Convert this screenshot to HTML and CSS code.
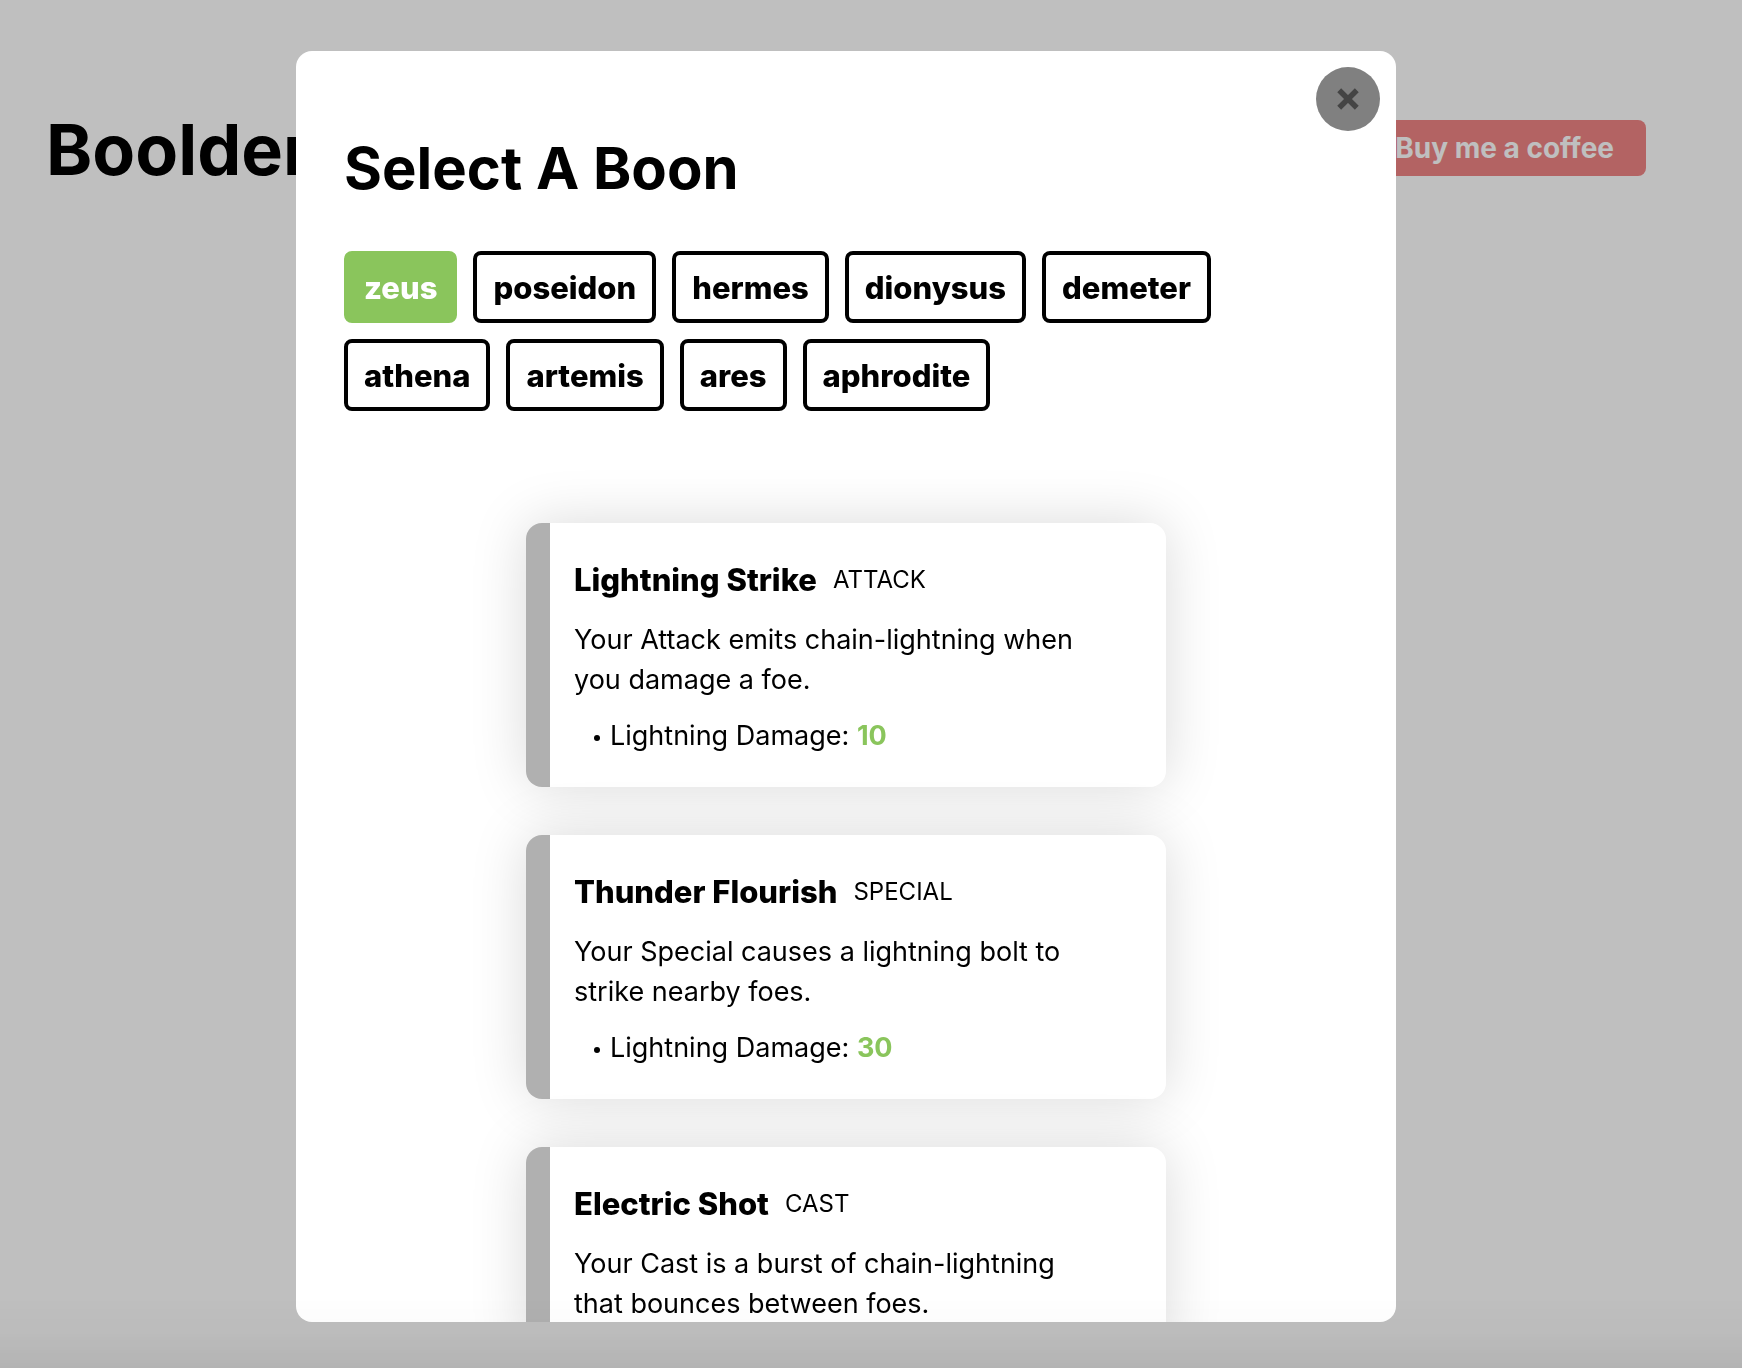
FILE: index.html
```html
<!DOCTYPE html>
<html lang="en">
<head>
<meta charset="utf-8">
<meta name="viewport" content="width=device-width, initial-scale=1">
<title>Boolder</title>
<link rel="stylesheet" href="styles.css">
</head>
<body>
<header class="site-header">
  <h1 class="site-title">Boolder</h1>
  <a class="coffee" href="#coffee">Buy me a coffee</a>
</header>

<div class="overlay">
  <section class="modal" role="dialog" aria-modal="true" aria-labelledby="modal-title">
    <button class="close" type="button" aria-label="Close">
      <svg class="close-icon" viewBox="0 0 20 20" aria-hidden="true"><path d="M2 2 18 18M18 2 2 18"/></svg>
    </button>
    <h2 class="modal-title" id="modal-title">Select A Boon</h2>
    <div class="gods">
      <button class="god god-active" type="button">zeus</button>
      <button class="god" type="button">poseidon</button>
      <button class="god" type="button">hermes</button>
      <button class="god" type="button">dionysus</button>
      <button class="god" type="button">demeter</button>
      <button class="god" type="button">athena</button>
      <button class="god" type="button">artemis</button>
      <button class="god" type="button">ares</button>
      <button class="god" type="button">aphrodite</button>
    </div>
    <div class="boons">
      <article class="boon">
        <div class="boon-head"><h3 class="boon-name">Lightning Strike</h3><span class="boon-slot">ATTACK</span></div>
        <p class="boon-text">Your Attack emits chain-lightning when you damage a foe.</p>
        <ul class="boon-stats"><li>Lightning Damage: <strong class="value">10</strong></li></ul>
      </article>
      <article class="boon">
        <div class="boon-head"><h3 class="boon-name">Thunder Flourish</h3><span class="boon-slot">SPECIAL</span></div>
        <p class="boon-text">Your Special causes a lightning bolt to strike nearby foes.</p>
        <ul class="boon-stats"><li>Lightning Damage: <strong class="value">30</strong></li></ul>
      </article>
      <article class="boon">
        <div class="boon-head"><h3 class="boon-name">Electric Shot</h3><span class="boon-slot">CAST</span></div>
        <p class="boon-text">Your Cast is a burst of chain-lightning that bounces between foes.</p>
      </article>
    </div>
  </section>
</div>
<div class="bottom-shade"></div>
</body>
</html>
```

FILE: styles.css
```css
* {
  box-sizing: border-box;
}

body {
  margin: 0;
  background: #fff;
  color: #000;
  font-family: Inter, "Liberation Sans", sans-serif;
  font-size: 27px;
  line-height: 40px;
}

h1,
h2,
h3,
p,
ul {
  margin: 0;
}

button {
  font: inherit;
  color: inherit;
  cursor: pointer;
}

.site-header {
  display: flex;
  align-items: flex-end;
  justify-content: space-between;
  padding: 96px 96px 0 46px;
}

.site-title {
  font-size: 70px;
  line-height: 108px;
  font-weight: 700;
}

.coffee {
  margin-bottom: 28px;
  padding: 8px 32px;
  border-radius: 8px;
  background: #ef8585;
  color: #fff;
  font-size: 28px;
  font-weight: 700;
  text-decoration: none;
}

.overlay {
  position: fixed;
  inset: 0;
  display: flex;
  justify-content: center;
  padding: 51px 50px 46px 0;
  background: rgba(0, 0, 0, 0.25);
}

.modal {
  position: relative;
  width: 100%;
  max-width: 1100px;
  padding: 80px 48px 0;
  border-radius: 16px;
  background: #fff;
  overflow: hidden;
}

.close {
  position: absolute;
  top: 16px;
  right: 16px;
  display: flex;
  align-items: center;
  justify-content: center;
  width: 64px;
  height: 64px;
  padding: 0;
  border: 0;
  border-radius: 50%;
  background: #808080;
}

.close-icon {
  width: 22px;
  height: 22px;
  fill: none;
  stroke: #444;
  stroke-width: 5;
}

.modal-title {
  font-size: 58px;
  line-height: 74px;
  font-weight: 700;
}

.gods {
  display: flex;
  flex-wrap: wrap;
  gap: 16px;
  padding-top: 46px;
}

.god {
  padding: 13px 16px 11px;
  border: 4px solid #000;
  border-radius: 8px;
  background: #fff;
  font-size: 31px;
  font-weight: 800;
}

.god-active {
  border-color: #8ac55c;
  background: #8ac55c;
  color: #fff;
}

.boons {
  display: flex;
  flex-direction: column;
  gap: 48px;
  max-width: 640px;
  margin: 112px auto 0;
}

.boon {
  padding: 37px 64px 31px 24px;
  border-left: 24px solid #b0b0b0;
  border-radius: 16px;
  background: #fff;
  box-shadow: 0 0 56px rgba(0, 0, 0, 0.15);
}

.boon-head {
  display: flex;
  align-items: center;
  gap: 16px;
}

.boon-name {
  font-size: 31px;
  font-weight: 800;
}

.boon-slot {
  font-size: 24px;
}

.boon-text {
  padding-top: 20px;
}

.boon-stats {
  padding: 16px 0 0 20px;
  list-style: none;
}

.boon-stats li::before {
  content: "";
  display: inline-block;
  width: 6px;
  height: 6px;
  margin-right: 10px;
  border-radius: 50%;
  background: #000;
  vertical-align: middle;
}

.value {
  color: #8ac55c;
}

.bottom-shade {
  position: fixed;
  inset: auto 0 0;
  height: 72px;
  background: linear-gradient(rgba(0, 0, 0, 0), rgba(0, 0, 0, 0.016) 50%, rgba(0, 0, 0, 0.06));
  pointer-events: none;
}
```
